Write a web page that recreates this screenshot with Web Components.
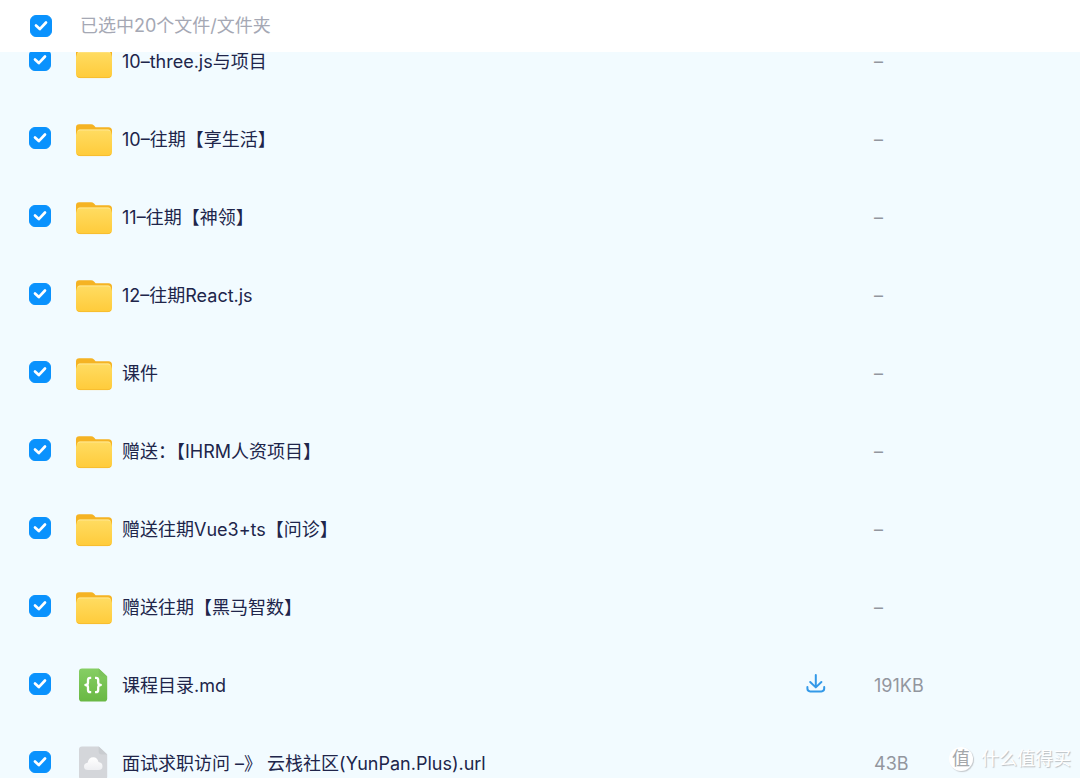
<!DOCTYPE html>
<html lang="zh-CN">
<head>
<meta charset="utf-8">
<meta name="viewport" content="width=device-width, initial-scale=1">
<title>文件列表</title>
<style>
    body {
        margin: 0;
        background: #fff;
        font-family: Inter, "Noto Sans CJK SC", sans-serif;
        font-size: 18px;
        line-height: 28px;
        color: #20254a;
    }
</style>
</head>
<body>

<file-browser>
    <select-bar slot="header">已选中20个文件/文件夹</select-bar>
    <file-row kind="folder" size="–">10–three.js与项目</file-row>
    <file-row kind="folder" size="–">10–往期【享生活】</file-row>
    <file-row kind="folder" size="–">11–往期【神领】</file-row>
    <file-row kind="folder" size="–">12–往期React.js</file-row>
    <file-row kind="folder" size="–">课件</file-row>
    <file-row kind="folder" size="–">赠送：【IHRM人资项目】</file-row>
    <file-row kind="folder" size="–">赠送往期Vue3+ts【问诊】</file-row>
    <file-row kind="folder" size="–">赠送往期【黑马智数】</file-row>
    <file-row kind="code" size="191KB" download>课程目录.md</file-row>
    <file-row kind="link" size="43B">面试求职访问 –》 云栈社区(YunPan.Plus).url</file-row>
    <site-mark slot="mark">什么值得买</site-mark>
</file-browser>

<script>
// tick box shared by the header and the rows
const checkStyle = `
    .check {
        display: grid;
        flex: none;
        width: 22px;
        height: 22px;
    }
    .check input {
        grid-area: 1 / 1;
        appearance: none;
        width: 22px;
        height: 22px;
        margin: 0;
        border: 1px solid #b8c4d0;
        border-radius: 6px;
        background: #fff;
    }
    .check input:checked {
        border-color: #0a92fd;
        background: #0a92fd;
    }
    .check svg {
        grid-area: 1 / 1;
        pointer-events: none;
    }
`;
const checkBox = `
    <span class="check">
        <input type="checkbox" id="check" checked>
        <svg width="22" height="22" viewBox="0 0 22 22" fill="none" stroke="#fff" stroke-width="2.7" stroke-linecap="round" stroke-linejoin="round"><path d="M6 10.5l3.8 3.6 6.2-6.6"/></svg>
    </span>
`;

const icons = {
    folder: `
        <svg width="36" height="36" viewBox="0 0 36 36">
            <defs><linearGradient id="f" x1="0" y1="0" x2="0" y2="1"><stop offset="0" stop-color="#ffdc62"/><stop offset="1" stop-color="#ffcb3a"/></linearGradient></defs>
            <path d="M0 5.5Q0 2.3 3.2 2.3H15Q16.8 2.3 18 3.6L19.6 5.2H32.5Q36 5.2 36 8.7V20H0Z" fill="#f5b323"/>
            <path d="M3.6 7.6H32.4Q34.6 7.6 35 9.8L36 13V30Q36 34 32 34H4Q0 34 0 30V13L1 9.8Q1.4 7.6 3.6 7.6Z" fill="url(#f)"/>
            <path d="M2 9.3Q2.4 8 4 8H32Q33.6 8 34 9.3" fill="none" stroke="#ffeaa0" stroke-width=".8"/>
            <path d="M1 32Q2 33.6 4 33.6H32Q34 33.6 35 32" fill="none" stroke="#f5b92c" stroke-width=".8"/>
        </svg>`,
    code: `
        <svg width="36" height="36" viewBox="0 0 36 36">
            <defs><linearGradient id="c" x1="0" y1="0" x2="0" y2="1"><stop offset="0" stop-color="#86ce64"/><stop offset="1" stop-color="#69b843"/></linearGradient></defs>
            <path d="M6 .6H22.7L31.2 8.5V30.5Q31.2 33.6 28.2 33.6H6Q3 33.6 3 30.5V3.6Q3 .6 6 .6Z" fill="url(#c)"/>
            <path d="M22.7 .6L31.2 8.5H25.7Q22.7 8.5 22.7 5.5Z" fill="#7cc35b"/>
            <path d="M15.2 9.8H14.2Q12 9.8 12 12V14.4Q12 17 9.4 17Q12 17 12 19.6V22Q12 24.2 14.2 24.2H15.2M19 9.8H20Q22.2 9.8 22.2 12V14.4Q22.2 17 24.8 17Q22.2 17 22.2 19.6V22Q22.2 24.2 20 24.2H19" fill="none" stroke="#fff" stroke-width="2.3" stroke-linejoin="round"/>
        </svg>`,
    link: `
        <svg width="36" height="36" viewBox="0 0 36 36">
            <defs><linearGradient id="l" x1="0" y1="0" x2="0" y2="1"><stop offset="0" stop-color="#fff"/><stop offset="1" stop-color="#eeeff2"/></linearGradient></defs>
            <path d="M6 .6H22.7L31.2 8.5V30.5Q31.2 33.6 28.2 33.6H6Q3 33.6 3 30.5V3.6Q3 .6 6 .6Z" fill="#d4d6da"/>
            <path d="M22.7 .6L31.2 8.5H25.7Q22.7 8.5 22.7 5.5Z" fill="#c9ccd0"/>
            <path d="M12 24Q8 24 8 20.5Q8 17.4 11.6 16.8Q12.5 11.2 17.3 11.2Q21.4 11.2 22.5 15.9Q26.5 16.6 26.5 20.2Q26.5 24 22.5 24Z" fill="url(#l)"/>
        </svg>`
};

class FileBrowser extends HTMLElement {
    constructor() {
        super();
        this.attachShadow({mode: 'open'}).innerHTML = `
            <style>
                :host {
                    display: flex;
                    flex-direction: column;
                    position: relative;
                    height: 100vh;
                    overflow: hidden;
                }
                .view {
                    flex: 1;
                    min-height: 0;
                    margin-bottom: 3px;
                    overflow: hidden;
                    background: #f2fbff;
                }
                /* list scrolled a little way under the header */
                .list {
                    margin-top: -29px;
                }
            </style>
            <slot name="header"></slot>
            <main class="view">
                <div class="list" role="list"><slot></slot></div>
            </main>
            <slot name="mark"></slot>
        `;
    }
}

class SelectBar extends HTMLElement {
    constructor() {
        super();
        this.attachShadow({mode: 'open'}).innerHTML = `
            <style>
                :host {
                    display: flex;
                    flex: none;
                    align-items: center;
                    gap: 28px;
                    height: 52px;
                    padding: 0 30px;
                    background: #fff;
                    color: #a5a8b4;
                }
                ${checkStyle}
            </style>
            ${checkBox}
            <label for="check"><slot></slot></label>
        `;
    }
}

class FileRow extends HTMLElement {
    constructor() {
        super();
        this.attachShadow({mode: 'open'});
    }

    connectedCallback() {
        const download = this.hasAttribute('download') ? `
            <button type="button" aria-label="下载">
                <svg width="20" height="20" viewBox="0 0 20 20" fill="none" stroke="#3399e8" stroke-width="2" stroke-linecap="round" stroke-linejoin="round"><path d="M9.8 1V13M4.2 8L9.8 13.4L15.4 8M1.4 13V14.6Q1.4 17.4 4.2 17.4H15.4Q18.2 17.4 18.2 14.6V13"/></svg>
            </button>` : '';
        this.setAttribute('role', 'listitem');
        this.shadowRoot.innerHTML = `
            <style>
                :host {
                    display: flex;
                    align-items: center;
                    height: 78px;
                    padding-left: 29px;
                }
                ${checkStyle}
                .check {
                    margin: 0 25px 4px 0;
                }
                .icon {
                    flex: none;
                    width: 36px;
                    height: 36px;
                    margin-right: 10px;
                }
                .icon svg, button svg {
                    display: block;
                }
                label {
                    flex: 1;
                    min-width: 0;
                    white-space: nowrap;
                    overflow: hidden;
                    text-overflow: ellipsis;
                }
                button {
                    margin: 0 48px 4px 0;
                    padding: 0;
                    border: 0;
                    background: none;
                }
                .size {
                    flex: none;
                    width: 206px;
                    color: #92969e;
                }
            </style>
            ${checkBox}
            <span class="icon">${icons[this.getAttribute('kind')]}</span>
            <label for="check"><slot></slot></label>
            ${download}
            <span class="size">${this.getAttribute('size')}</span>
        `;
    }
}

class SiteMark extends HTMLElement {
    constructor() {
        super();
        this.attachShadow({mode: 'open'}).innerHTML = `
            <style>
                :host {
                    display: flex;
                    align-items: center;
                    gap: 8px;
                    position: absolute;
                    right: 9px;
                    bottom: 8px;
                    color: #fff;
                    text-shadow: 1px 1px 1px #b9bdc0;
                    pointer-events: none;
                }
                .badge {
                    width: 24px;
                    height: 24px;
                    border-radius: 50%;
                    background: #fff;
                    box-shadow: 1px 1px 1px #c4c8cc;
                    color: #a4a7aa;
                    font-size: 18px;
                    line-height: 24px;
                    text-align: center;
                    text-shadow: none;
                }
            </style>
            <span class="badge">值</span>
            <slot></slot>
        `;
    }
}

customElements.define('file-browser', FileBrowser);
customElements.define('select-bar', SelectBar);
customElements.define('file-row', FileRow);
customElements.define('site-mark', SiteMark);
</script>
</body>
</html>
